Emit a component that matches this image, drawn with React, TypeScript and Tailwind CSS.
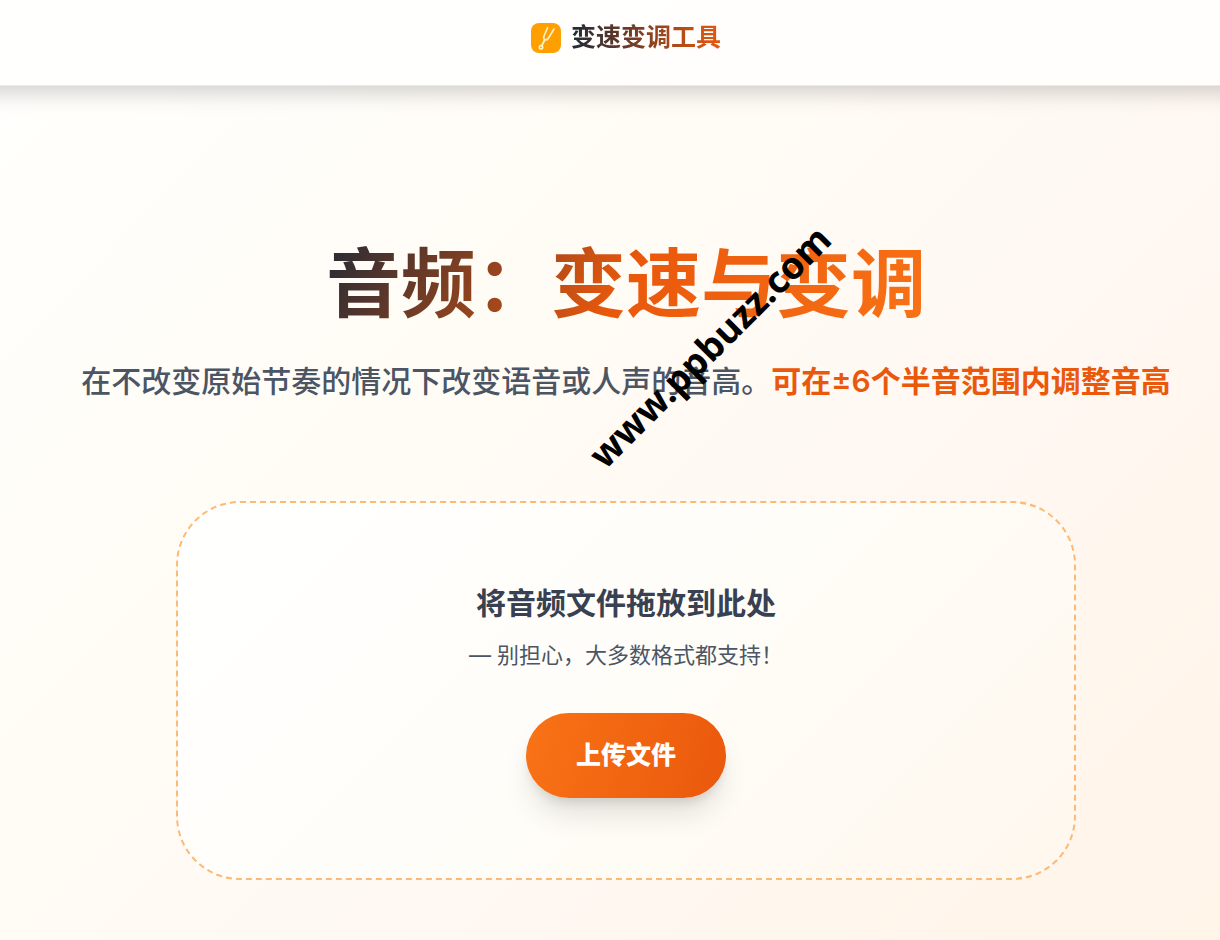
import React, { useRef, useState } from "react";

const FONT = "font-['Inter','Noto_Sans_CJK_SC',sans-serif]";

function Logo() {
  return (
    <svg className="size-[30px]" viewBox="0 0 30 30" fill="none" aria-hidden="true">
      <rect width="30" height="30" rx="8" fill="#ff9f00" />
      <g stroke="#fff3c9" strokeWidth="1.6" strokeLinecap="round" strokeLinejoin="round">
        <path d="M16.6 4.8 L13 13 C12.3 14.8 12.6 16 13.9 16.6 C15.3 17.2 16.6 16.6 17.5 15 L23 6" />
        <path d="M13.6 17 L10.8 22.8" strokeWidth="1.9" />
        <circle cx="10" cy="24.3" r="1.7" />
      </g>
    </svg>
  );
}

function Header() {
  return (
    <header className="relative -mx-8 flex h-[86px] justify-center border-b border-[#f6e7da] bg-white/80 pt-[19px] pl-8 shadow-[0_7px_20px_0_rgba(0,0,0,0.18)]">
      <a href="/" className="flex h-[38px] items-center gap-[10px]">
        <Logo />
        <span className="bg-[linear-gradient(90deg,#1f2937,#ea580c)] bg-clip-text pb-[2px] text-[25px] leading-9 font-semibold text-transparent">
          变速变调工具
        </span>
      </a>
    </header>
  );
}

function Watermark() {
  return (
    <div className="pointer-events-none absolute top-[66%] left-[57%] -translate-x-1/2 -translate-y-1/2 -rotate-45 font-['Noto_Sans',sans-serif] text-[37px] leading-none font-bold text-black">
      www.ppbuzz.com
    </div>
  );
}

function UploadBox() {
  const inputRef = useRef<HTMLInputElement>(null);
  const [fileName, setFileName] = useState("");

  return (
    <section
      className="mx-auto flex w-full max-w-[900px] flex-col items-center rounded-[64px] border-2 border-dashed border-[#fdba74] bg-[linear-gradient(135deg,#ffffff,#fffdf8_50%,#fff7ee)] px-8 py-20 text-center"
      onDragOver={(e) => e.preventDefault()}
      onDrop={(e) => {
        e.preventDefault();
        setFileName(e.dataTransfer.files[0]?.name ?? "");
      }}
    >
      <h2 className="text-[30px] leading-10 font-bold text-[#374151]">{fileName || "将音频文件拖放到此处"}</h2>
      <p className="mt-[14px] text-[22px] leading-9 text-[#4b5563]">— 别担心，大多数格式都支持！</p>
      <button
        type="button"
        onClick={() => inputRef.current?.click()}
        className="mt-10 rounded-full bg-[linear-gradient(105deg,#f97316,#ea580c)] px-[50px] py-6 text-[25px] leading-[37px] font-extrabold text-white shadow-[0_20px_30px_-5px_rgba(0,0,0,0.12),0_8px_12px_-5px_rgba(0,0,0,0.12)]"
      >
        上传文件
      </button>
      <input
        ref={inputRef}
        type="file"
        accept="audio/*"
        aria-label="上传文件"
        className="hidden"
        onChange={(e) => setFileName(e.target.files?.[0]?.name ?? "")}
      />
    </section>
  );
}

export default function App() {
  return (
    <div
      className={`min-h-screen overflow-hidden bg-[linear-gradient(135deg,#fffffd,#fffcf6_35%,#fff8f2_65%,#fff4e8)] ${FONT}`}
    >
      {/* bleeds past both edges so the shadow runs the full width; pl-8 on main keeps the same centre */}
      <Header />
      <main className="pt-[144px] pb-[60px] pl-8">
        <div className="relative text-center">
          <h1 className="inline-block bg-[linear-gradient(120deg,#1f2937,#ea580c_50%,#f97316)] bg-clip-text text-[75px] leading-[108px] font-bold text-transparent">
            音频：变速与变调
          </h1>
          <p className="mt-[19px] text-[30px] leading-[48px] font-medium text-[#4b5563]">
            在不改变原始节奏的情况下改变语音或人声的音高。
            <span className="font-semibold text-[#ea580c]">可在±6个半音范围内调整音高</span>
          </p>
          <Watermark />
        </div>
        <div className="mt-24 px-8">
          <UploadBox />
        </div>
      </main>
    </div>
  );
}
